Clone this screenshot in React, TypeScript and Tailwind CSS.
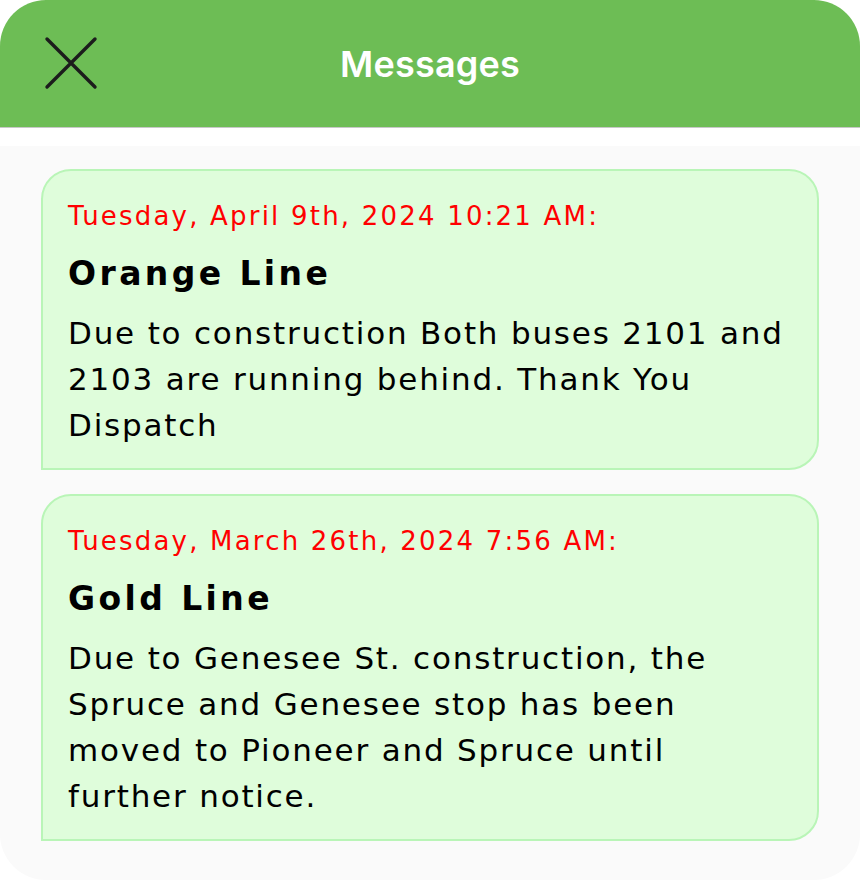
import React from "react";

const messages = [
  {
    date: "Tuesday, April 9th, 2024 10:21 AM:",
    title: "Orange Line",
    body: "Due to construction Both buses 2101 and 2103 are running behind. Thank You Dispatch",
  },
  {
    date: "Tuesday, March 26th, 2024 7:56 AM:",
    title: "Gold Line",
    body: "Due to Genesee St. construction, the Spruce and Genesee stop has been moved to Pioneer and Spruce until further notice.",
  },
];

export default function App() {
  return (
    <div className="w-[860px] h-[880px] bg-white">
      <div className="w-full h-full rounded-[46px] overflow-hidden flex flex-col bg-[#fafafa]">
        <div className="h-[128px] bg-[#6dbd55] relative flex items-center justify-center border-b border-[#c8c8c8] shrink-0">
          <svg
            className="absolute left-[44px] top-[36px]"
            width="54"
            height="54"
            viewBox="0 0 54 54"
          >
            <path d="M3 3 L51 51 M51 3 L3 51" stroke="#1c1c1c" strokeWidth="3.4" strokeLinecap="round" />
          </svg>
          <span
            className="text-white text-[36px] font-semibold tracking-[0.2px]"
            style={{ fontFamily: "Inter, Roboto, sans-serif" }}
          >
            Messages
          </span>
        </div>
        <div className="h-[18px] bg-white shrink-0" />
        <div
          className="flex flex-col gap-[24px] px-[41px] pt-[23px]"
          style={{ fontFamily: "'DejaVu Sans', Verdana, sans-serif" }}
        >
          {messages.map((m, i) => (
            <div
              key={i}
              className="bg-[#dffddb] border-2 border-[#b9f5b7] rounded-tl-[30px] rounded-tr-[30px] rounded-br-[30px] rounded-bl-none pl-[25px] pr-[30px] pt-[27px] pb-[20px]"
            >
              <div className="text-[#ff0000] text-[26px] leading-[36px] tracking-[2.2px]">{m.date}</div>
              <div className="text-black text-[33px] font-bold leading-[44px] mt-[18px] tracking-[3.4px]">{m.title}</div>
              <div className="text-black text-[31px] leading-[46px] mt-[14px] tracking-[1.8px]">{m.body}</div>
            </div>
          ))}
        </div>
      </div>
    </div>
  );
}
